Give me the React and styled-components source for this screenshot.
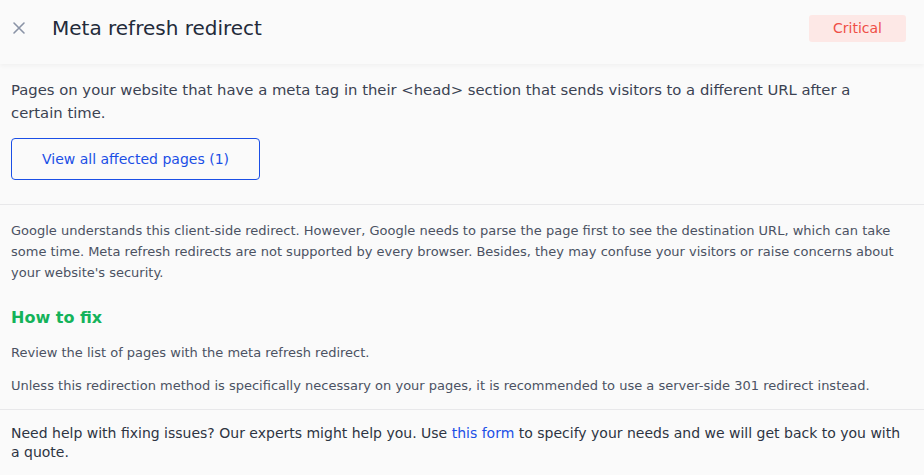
import React from 'react';
import styled, { createGlobalStyle } from 'styled-components';

const GlobalStyle = createGlobalStyle`
body{
     margin: 0;
     background: #fafafa;
     font-family: "DejaVu Sans", "Open Sans", sans-serif;
}
`;

function CloseIcon() {
  return <svg width="14" height="14" viewBox="0 0 14 14">
       <path d="M2 2 L12 12 M12 2 L2 12" stroke="#8a93a6" strokeWidth="1.6" strokeLinecap="round" />
  </svg>;
}

function App() {
  return <Panel>
       <GlobalStyle />
       <Header>
            <CloseButton><CloseIcon /></CloseButton>
            <Title>Meta refresh redirect</Title>
            <Badge>Critical</Badge>
       </Header>
       <Section>
            <Lead>Pages on your website that have a meta tag in their &lt;head&gt; section that sends visitors to a different URL after a certain time.</Lead>
            <OutlineButton>View all affected pages (1)</OutlineButton>
       </Section>
       <Section divided>
            <Body>Google understands this client-side redirect. However, Google needs to parse the page first to see the destination URL, which can take some time. Meta refresh redirects are not supported by every browser. Besides, they may confuse your visitors or raise concerns about your website's security.</Body>
            <FixTitle>How to fix</FixTitle>
            <Body>Review the list of pages with the meta refresh redirect.</Body>
            <Body last>Unless this redirection method is specifically necessary on your pages, it is recommended to use a server-side 301 redirect instead.</Body>
       </Section>
       <Footer>
            Need help with fixing issues? Our experts might help you. Use <Link href="#">this form</Link> to specify your needs and we will get back to you with a quote.
       </Footer>
  </Panel>;
}

const Panel = styled.div`
width: 924px;
height: 475px;
overflow: hidden;
background: #fafafa;
`;
const Header = styled.div`
height: 64px;
display: flex;
align-items: center;
padding: 0 18px 8px 11px;
box-sizing: border-box;
background: #fafafa;
box-shadow: 0 2px 4px rgba(0,0,0,0.04);
position: relative;
`;
const CloseButton = styled.div`
width: 14px;
height: 14px;
display: flex;
margin-left: 1px;
margin-right: 26px;
`;
const Title = styled.h1`
flex: 1;
margin: 0;
font-size: 20px;
font-weight: 400;
color: #232b3a;
`;
const Badge = styled.div`
background: #fde8e6;
color: #ef4f46;
font-size: 14px;
border-radius: 3px;
width: 97px;
height: 27px;
display: flex;
align-items: center;
justify-content: center;
`;
const Section = styled.div`
padding: ${p => p.divided ? '15px 11px 13px' : '14px 11px 24px'};
border-top: ${p => p.divided ? '1px solid #e8e8ea' : 'none'};
`;
const Lead = styled.p`
margin: 0 0 14px;
max-width: 856px;
font-size: 14.8px;
line-height: 23px;
color: #3b4252;
`;
const OutlineButton = styled.button`
width: 249px;
height: 42px;
border: 1px solid #1b4fe6;
border-radius: 4px;
background: transparent;
color: #1b4fe6;
font-family: inherit;
font-size: 14px;
`;
const Body = styled.p`
margin: 0 0 ${p => p.last ? '0' : '12px'};
font-size: 13px;
line-height: 21px;
color: #4b5263;
`;
const FixTitle = styled.h3`
margin: 23px 0 12px;
font-size: 16px;
line-height: 24px;
font-weight: 700;
color: #14b35a;
`;
const Footer = styled.div`
border-top: 1px solid #e8e8ea;
padding: 14px 11px;
font-size: 14px;
line-height: 19px;
color: #2d3442;
`;
const Link = styled.a`
color: #1b4fe6;
text-decoration: none;
`;

export default App;
